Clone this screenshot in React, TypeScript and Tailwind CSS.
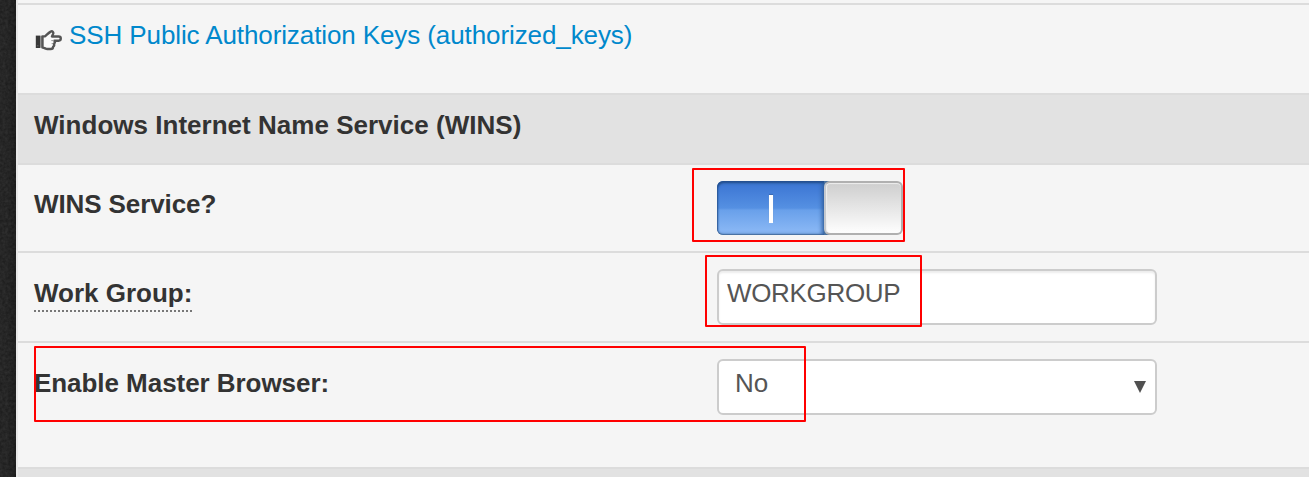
import type { ReactNode } from "react";

function Row({ className, children }: { className: string; children: ReactNode }) {
  return (
    <div className={`relative flex shrink-0 items-start border-t-2 border-[#dcdcdc] pl-4 text-[26px] leading-[36px] ${className}`}>
      {children}
    </div>
  );
}

function Label({ children }: { children: ReactNode }) {
  return <div className="w-[683px] shrink-0 font-bold text-[#333]">{children}</div>;
}

function Mark({ className }: { className: string }) {
  return <div className={`pointer-events-none absolute rounded-[1px] border-2 border-[#f00] ${className}`} />;
}

function HandIcon() {
  return (
    <svg className="mt-[13px] mr-[7px] h-[21px] w-[27px] shrink-0" viewBox="0 0 27 21" fill="none">
      <rect x="0.8" y="5.6" width="4.4" height="12.4" fill="#383838" />
      <path d="M1.9 15.8h1.6" stroke="#666" strokeWidth="1" />
      <path d="M6 5.8v12" stroke="#777" strokeWidth="1.4" />
      <path
        d="M7.5 6.4h2.4c1.5-1.2 3.6-3.6 5.8-4.8 1.7-.8 3.1.5 2.4 2.3l-1.1 2.6h6.6c2.9 0 2.9 4.2 0 4.2h-4.2c.9 1.2.5 2.3-.5 3 .6 1.3.2 2.4-.8 3 0 1.7-.8 2.3-2.4 2.3h-3.4c-1.8 0-2.6-1.4-4.8-1.4z"
        fill="#fafafa"
        stroke="#555"
        strokeWidth="2.4"
        strokeLinejoin="round"
      />
      <path d="M16.3 10.6h2.7M16.6 13.6h1.6" stroke="#999" strokeWidth="1" />
    </svg>
  );
}

function Toggle() {
  return (
    <div className="mt-[16px] flex h-[54px] w-[186px] overflow-hidden rounded-[6px] bg-[linear-gradient(90deg,#49719f_110px,#ccc_120px)]">
      <div className="flex h-full w-[107px] justify-center rounded-l-[6px] bg-[linear-gradient(#3a70ca_0%,#407ad6_12%,#5590e2_50%,#69a0ea_54%,#8ab8f5_95%)] shadow-[inset_1px_2px_2px_#24508f,inset_-2px_0_4px_#31609f,inset_0_-1px_1px_#57799f]">
        <div className="mt-[14px] ml-px h-[28px] w-[4px] bg-white shadow-[0_-1px_1px_#3566ae,0_0_1px_#b5d0f5]" />
      </div>
      <div className="h-full w-[79px] rounded-[6px] border-2 border-[#b0b0b0] border-l-[#c4c8ce] bg-[linear-gradient(#cecece,#fefefe)] shadow-[inset_0_1px_1px_#eee,inset_1px_0_1px_#eee]" />
    </div>
  );
}

export default function App() {
  return (
    <div className="flex h-[477px] w-[1309px] overflow-hidden bg-[#f5f5f5] font-['Liberation_Sans',Arial,sans-serif]">
      <svg className="h-[477px] w-4 shrink-0" viewBox="0 0 16 477">
        <defs>
          <filter id="grain" x="0" y="0" width="100%" height="100%" colorInterpolationFilters="sRGB">
            <feTurbulence type="fractalNoise" baseFrequency="0.35" numOctaves="2" seed="4" />
            <feColorMatrix values="0.1 0 0 0 0.1  0.1 0 0 0 0.1  0.1 0 0 0 0.1  0 0 0 0 1" />
          </filter>
          <linearGradient id="edge">
            <stop offset="0.4" stopColor="#000" stopOpacity="0" />
            <stop offset="1" stopColor="#000" stopOpacity="0.2" />
          </linearGradient>
        </defs>
        <rect width="16" height="477" filter="url(#grain)" />
        <rect width="16" height="477" fill="url(#edge)" />
      </svg>
      <div className="flex flex-1 flex-col border-l-2 border-[#e8e8e8] pt-[3px]">
        <Row className="h-[90px] pt-3">
          <div className="ml-[1px] flex">
            <HandIcon />
            <a className="whitespace-nowrap tracking-[-0.1px] text-[#08c]">SSH Public Authorization Keys (authorized_keys)</a>
          </div>
        </Row>
        <Row className="h-[70px] bg-[#e2e2e2] pt-3">
          <h2 className="font-bold tracking-[0.02px] text-[#333]">Windows Internet Name Service (WINS)</h2>
        </Row>
        <Row className="h-[88px]">
          <Label>
            <div className="mt-[21px] tracking-[-0.1px]">WINS Service?</div>
          </Label>
          <Toggle />
          <Mark className="top-[3px] left-[674px] h-[74px] w-[213px]" />
        </Row>
        <Row className="h-[90px]">
          <Label>
            <span className="mt-[23px] inline-block border-b-2 border-dotted border-[#777] leading-[34px]">Work Group:</span>
          </Label>
          <div className="mt-[16px] h-[56px] w-[440px] rounded-[6px] border-2 border-[#ccc] bg-white pt-1 pl-2 tracking-[-0.33px] text-[#555] shadow-[inset_0_2px_2px_rgba(0,0,0,0.075)]">
            WORKGROUP
          </div>
          <Mark className="top-[2px] left-[687px] h-[72px] w-[217px]" />
        </Row>
        <Row className="h-[126px]">
          <Label>
            <div className="mt-[22px] tracking-[-0.05px]">Enable Master Browser:</div>
          </Label>
          <div className="mt-[16px] flex h-[56px] w-[440px] justify-between rounded-[6px] border-2 border-[#ccc] bg-white pt-1 pr-[9px] pl-4 text-[#555]">
            <span>No</span>
            <svg className="mt-[16px] h-3 w-3" viewBox="0 0 12 12">
              <path d="M0 0h12L6 12z" fill="#505050" />
            </svg>
          </div>
          <Mark className="top-[3px] left-[16px] h-[76px] w-[772px]" />
        </Row>
        <Row className="h-[10px] bg-[#e2e2e2]">{null}</Row>
      </div>
    </div>
  );
}
